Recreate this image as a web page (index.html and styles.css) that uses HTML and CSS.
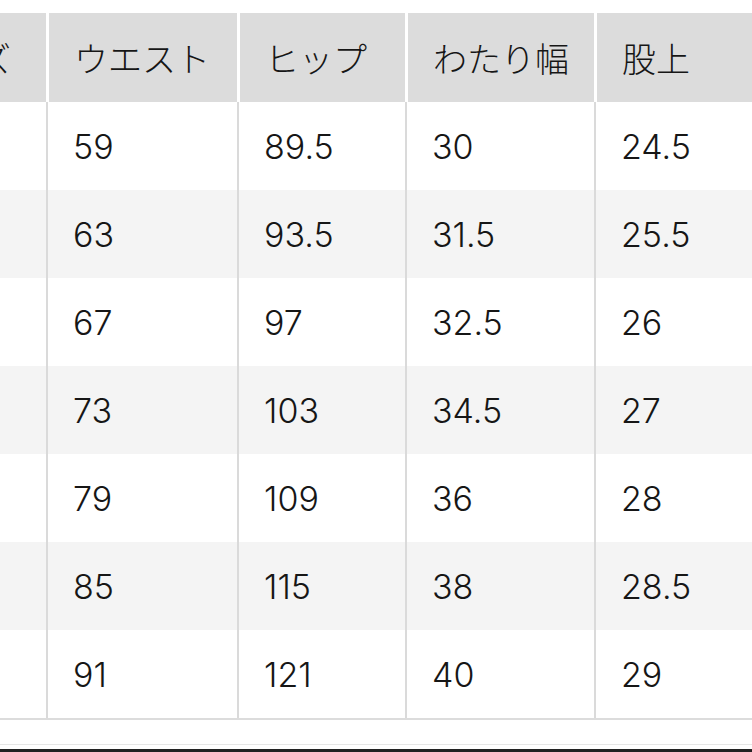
FILE: index.html
```html
<!DOCTYPE html>
<html lang="ja">
<head>
<meta charset="utf-8">
<link rel="stylesheet" href="styles.css">
</head>
<body>
<div class="page">
  <div class="table">
    <div class="row head">
      <div class="cell first">サイズ</div>
      <div class="cell">ウエスト</div>
      <div class="cell">ヒップ</div>
      <div class="cell">わたり幅</div>
      <div class="cell">股上</div>
    </div>
    <div class="row"><div class="cell first"></div><div class="cell">59</div><div class="cell">89.5</div><div class="cell">30</div><div class="cell">24.5</div></div>
    <div class="row alt"><div class="cell first"></div><div class="cell">63</div><div class="cell">93.5</div><div class="cell">31.5</div><div class="cell">25.5</div></div>
    <div class="row"><div class="cell first"></div><div class="cell">67</div><div class="cell">97</div><div class="cell">32.5</div><div class="cell">26</div></div>
    <div class="row alt"><div class="cell first"></div><div class="cell">73</div><div class="cell">103</div><div class="cell">34.5</div><div class="cell">27</div></div>
    <div class="row"><div class="cell first"></div><div class="cell">79</div><div class="cell">109</div><div class="cell">36</div><div class="cell">28</div></div>
    <div class="row alt"><div class="cell first"></div><div class="cell">85</div><div class="cell">115</div><div class="cell">38</div><div class="cell">28.5</div></div>
    <div class="row last"><div class="cell first"></div><div class="cell">91</div><div class="cell">121</div><div class="cell">40</div><div class="cell">29</div></div>
  </div>
  <div class="foot"></div>
  <div class="bar"></div>
</div>
</body>
</html>
```

FILE: styles.css
```css
html, body {
  margin: 0;
  padding: 0;
  background: #ffffff;
}
body {
  width: 752px;
  height: 752px;
  overflow: hidden;
  font-family: "Inter", "Noto Sans CJK JP", sans-serif;
  font-weight: 300;
  color: #161616;
}
.page {
  width: 752px;
  height: 752px;
  display: flex;
  flex-direction: column;
  padding-top: 13px;
  box-sizing: border-box;
  overflow: hidden;
}
.table {
  display: flex;
  flex-direction: column;
  margin-left: -115px;
  width: 1000px;
}
.row {
  display: grid;
  grid-template-columns: 161px 191px 168px 189px 391px;
  height: 88px;
  background: #ffffff;
}
.row.alt {
  background: #f4f4f4;
}
.row.head {
  height: 89px;
  background: #ffffff;
}
.row.last {
  border-bottom: 2px solid #dcdcdc;
}
.cell {
  display: flex;
  align-items: center;
  padding-left: 25px;
  font-size: 34px;
  border-left: 2px solid #dadada;
  box-sizing: border-box;
  white-space: nowrap;
  overflow: hidden;
}
.cell.first {
  border-left: none;
}
.head .cell {
  background: #dcdcdc;
  border-left: 3px solid #ffffff;
  padding-left: 25px;
  font-family: "Noto Sans CJK JP", sans-serif;
  font-weight: 300;
}
.head .cell.first {
  border-left: none;
}
.foot {
  height: 24px;
  border-bottom: 1px solid #e6e6e6;
}
.bar {
  margin-top: 4px;
  height: 3px;
  background: #222222;
}
```
